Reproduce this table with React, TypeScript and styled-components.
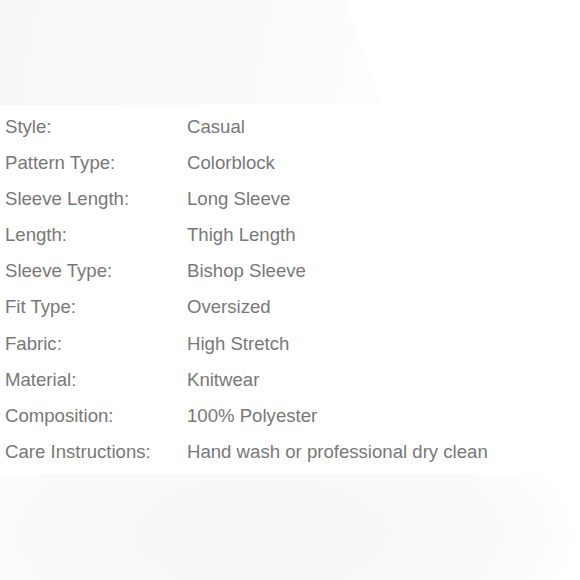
import React from "react";
import styled, { createGlobalStyle } from "styled-components";

const GlobalStyle = createGlobalStyle`
  html, body {
    margin: 0;
    padding: 0;
    background: #ffffff;
  }
`;

const Page = styled.div`
  display: flex;
  flex-direction: column;
  width: 580px;
  height: 580px;
  overflow: hidden;
  background: #ffffff;
`;

const TopShade = styled.div`
  height: 105px;
  width: 382px;
  background: linear-gradient(100deg, #f8f8f8 0%, #fafafa 60%, #fcfcfc 88%, #fdfdfd 100%);
  clip-path: polygon(0 0, 345px 0, 382px 105px, 0 105px);
`;

const Table = styled.div`
  display: grid;
  grid-template-columns: 182px auto;
  padding: 4px 0 4px 5px;
  font-family: "Liberation Sans", Arial, Helvetica, sans-serif;
  font-size: 18.6px;
  line-height: 36.1px;
  color: #787878;
`;

const Label = styled.div`
  white-space: nowrap;
`;

const Value = styled.div`
  white-space: nowrap;
`;

const BottomShade = styled.div`
  flex: 1;
  background: radial-gradient(ellipse 320px 140px at 260px 60px, #f7f7f7 0%, #f9f9f9 60%, #fcfcfc 90%, #ffffff 100%);
`;

const rows: [string, string][] = [
  ["Style:", "Casual"],
  ["Pattern Type:", "Colorblock"],
  ["Sleeve Length:", "Long Sleeve"],
  ["Length:", "Thigh Length"],
  ["Sleeve Type:", "Bishop Sleeve"],
  ["Fit Type:", "Oversized"],
  ["Fabric:", "High Stretch"],
  ["Material:", "Knitwear"],
  ["Composition:", "100% Polyester"],
  ["Care Instructions:", "Hand wash or professional dry clean"],
];

const App: React.FC = () => {
  return (
    <>
      <GlobalStyle />
      <Page>
        <TopShade />
        <Table>
          {rows.map(([label, value]) => (
            <React.Fragment key={label}>
              <Label>{label}</Label>
              <Value>{value}</Value>
            </React.Fragment>
          ))}
        </Table>
        <BottomShade />
      </Page>
    </>
  );
};

export default App;
